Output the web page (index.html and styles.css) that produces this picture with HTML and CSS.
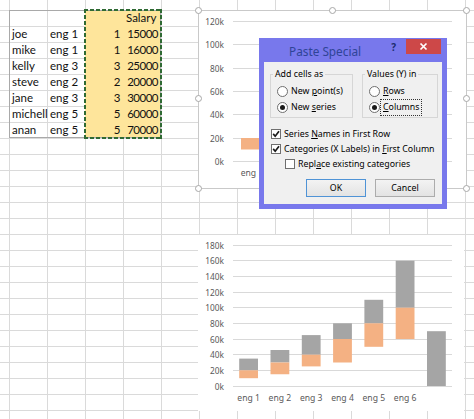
FILE: index.html
```html
<!DOCTYPE html>
<html>
<head>
<meta charset="utf-8">
<link rel="stylesheet" href="styles.css">
</head>
<body>
<div class="sheet">
  <div class="table">
    <div class="cell"></div><div class="cell"></div><div class="cell fill"></div><div class="cell fill num hdr">Salary</div>
    <div class="cell">joe</div><div class="cell">eng 1</div><div class="cell fill num">1</div><div class="cell fill num">15000</div>
    <div class="cell">mike</div><div class="cell">eng 1</div><div class="cell fill num">1</div><div class="cell fill num">16000</div>
    <div class="cell">kelly</div><div class="cell">eng 3</div><div class="cell fill num">3</div><div class="cell fill num">25000</div>
    <div class="cell">steve</div><div class="cell">eng 2</div><div class="cell fill num">2</div><div class="cell fill num">20000</div>
    <div class="cell">jane</div><div class="cell">eng 3</div><div class="cell fill num">3</div><div class="cell fill num">30000</div>
    <div class="cell">michell</div><div class="cell">eng 5</div><div class="cell fill num">5</div><div class="cell fill num">60000</div>
    <div class="cell">anan</div><div class="cell">eng 5</div><div class="cell fill num">5</div><div class="cell fill num">70000</div>
  </div>
  <div class="ants"></div>

  <div class="chart chart-top">
    <svg width="267" height="177" viewBox="0 0 267 177">
      <g class="grid">
        <line x1="34" x2="253" y1="150.5" y2="150.5"/>
        <line x1="34" x2="253" y1="127.5" y2="127.5"/>
        <line x1="34" x2="253" y1="103.5" y2="103.5"/>
        <line x1="34" x2="253" y1="80.5" y2="80.5"/>
        <line x1="34" x2="253" y1="57.5" y2="57.5"/>
        <line x1="34" x2="253" y1="33.5" y2="33.5"/>
        <line x1="34" x2="253" y1="10.5" y2="10.5"/>
      </g>
      <g class="ylab">
        <text x="25" y="150">0k</text>
        <text x="25" y="127">20k</text>
        <text x="25" y="103">40k</text>
        <text x="25" y="80">60k</text>
        <text x="25" y="57">80k</text>
        <text x="25" y="33">100k</text>
        <text x="25" y="10">120k</text>
      </g>
      <rect class="orange" x="42" y="127" width="19" height="11.5"/>
      <text class="xlab" x="53" y="162">eng 1</text>
    </svg>
    <span class="handle h-tl"></span><span class="handle h-tm"></span><span class="handle h-tr"></span>
    <span class="handle h-ml"></span><span class="handle h-mr"></span>
    <span class="handle h-bl"></span><span class="handle h-bm"></span><span class="handle h-br"></span>
  </div>

  <div class="chart chart-bottom">
    <svg width="266" height="176" viewBox="0 0 266 176">
      <g class="grid">
        <line x1="35" x2="254" y1="151.5" y2="151.5"/>
        <line x1="35" x2="254" y1="135.5" y2="135.5"/>
        <line x1="35" x2="254" y1="119.5" y2="119.5"/>
        <line x1="35" x2="254" y1="104.5" y2="104.5"/>
        <line x1="35" x2="254" y1="88.5" y2="88.5"/>
        <line x1="35" x2="254" y1="72.5" y2="72.5"/>
        <line x1="35" x2="254" y1="57.5" y2="57.5"/>
        <line x1="35" x2="254" y1="41.5" y2="41.5"/>
        <line x1="35" x2="254" y1="25.5" y2="25.5"/>
        <line x1="35" x2="254" y1="10.5" y2="10.5"/>
      </g>
      <g class="ylab">
        <text x="26" y="151">0k</text>
        <text x="26" y="135">20k</text>
        <text x="26" y="119">40k</text>
        <text x="26" y="104">60k</text>
        <text x="26" y="88">80k</text>
        <text x="26" y="72">100k</text>
        <text x="26" y="57">120k</text>
        <text x="26" y="41">140k</text>
        <text x="26" y="25">160k</text>
        <text x="26" y="10">180k</text>
      </g>
      <g>
        <rect class="gray" x="41.2" y="123.6" width="18.8" height="11.7"/>
        <rect class="orange" x="41.2" y="135.3" width="18.8" height="7.9"/>
        <rect class="gray" x="72.5" y="115" width="18.8" height="12.5"/>
        <rect class="orange" x="72.5" y="127.5" width="18.8" height="11.75"/>
        <rect class="gray" x="103.8" y="100.1" width="18.8" height="19.6"/>
        <rect class="orange" x="103.8" y="119.7" width="18.8" height="11.7"/>
        <rect class="gray" x="135.1" y="88.3" width="18.8" height="15.7"/>
        <rect class="orange" x="135.1" y="104" width="18.8" height="23.5"/>
        <rect class="gray" x="166.4" y="64.8" width="18.8" height="23.5"/>
        <rect class="orange" x="166.4" y="88.3" width="18.8" height="23.5"/>
        <rect class="gray" x="197.7" y="25.7" width="18.8" height="47"/>
        <rect class="orange" x="197.7" y="72.7" width="18.8" height="31.3"/>
        <rect class="gray" x="229" y="96.2" width="18.8" height="54.8"/>
      </g>
      <g class="xlabs">
        <text class="xlab" x="50.6" y="163">eng 1</text>
        <text class="xlab" x="81.9" y="163">eng 2</text>
        <text class="xlab" x="113.2" y="163">eng 3</text>
        <text class="xlab" x="144.5" y="163">eng 4</text>
        <text class="xlab" x="175.8" y="163">eng 5</text>
        <text class="xlab" x="207.1" y="163">eng 6</text>
      </g>
    </svg>
  </div>

  <div class="dialog">
    <div class="titlebar">
      <span class="title">Paste Special</span>
      <span class="help">?</span>
      <span class="close"><svg width="35" height="15" viewBox="0 0 35 15"><path d="M14.5 4.5 L20.5 10.5 M20.5 4.5 L14.5 10.5" stroke="#fff" stroke-width="1.7" fill="none"/></svg></span>
    </div>
    <div class="client">
      <div class="groups">
        <fieldset class="grp grp-add">
          <legend>Add cells as</legend>
          <div class="opt"><span class="radio"></span><span>New <u>p</u>oint(s)</span></div>
          <div class="opt"><span class="radio on"></span><span>New <u>s</u>eries</span></div>
        </fieldset>
        <fieldset class="grp grp-val">
          <legend>Values (Y) in</legend>
          <div class="opt"><span class="radio"></span><span><u>R</u>ows</span></div>
          <div class="opt"><span class="radio on"></span><span class="focus"><u>C</u>olumns</span></div>
        </fieldset>
      </div>
      <div class="checks">
        <div class="chk"><span class="box"><svg width="8" height="8" viewBox="0 0 8 8"><path d="M1.2 3.9 L3.2 6.2 L7 1.3" stroke="#1a1a1a" stroke-width="1.7" fill="none"/></svg></span><span>Series <u>N</u>ames in First Row</span></div>
        <div class="chk"><span class="box"><svg width="8" height="8" viewBox="0 0 8 8"><path d="M1.2 3.9 L3.2 6.2 L7 1.3" stroke="#1a1a1a" stroke-width="1.7" fill="none"/></svg></span><span>Categories (X Labels) in <u>F</u>irst Column</span></div>
        <div class="chk indent"><span class="box"></span><span>Repl<u>a</u>ce existing categories</span></div>
      </div>
      <div class="buttons">
        <button class="btn default">OK</button>
        <button class="btn">Cancel</button>
      </div>
    </div>
  </div>
</div>
</body>
</html>
```
FILE: styles.css
```css
* { box-sizing: border-box; }
html, body { margin: 0; padding: 0; }
body {
  width: 474px;
  height: 419px;
  overflow: hidden;
  background: #fff;
  font-family: Lato, "Liberation Sans", sans-serif;
}
.sheet {
  position: relative;
  width: 474px;
  height: 419px;
  padding: 10px 0 0 9px;
  background-color: #fff;
  background-image:
    linear-gradient(to right, #dadada 1px, transparent 1px),
    linear-gradient(to bottom, #dadada 1px, transparent 1px);
  background-size: 38px 16px;
  background-position: 9px 10px;
}

/* data table */
.table {
  display: grid;
  grid-template-columns: repeat(4, 38px);
  grid-auto-rows: 16px;
  width: 152px;
  outline: 1px solid #a9a9a9;
  outline-offset: -1px;
  font-size: 11.5px;
  color: #111;
}
.cell {
  padding: 1px 3px 0;
  line-height: 14px;
  white-space: nowrap;
}
.num { text-align: right; letter-spacing: -0.5px; }
.hdr { padding-right: 5px; letter-spacing: 0; }
.fill { background: #fee59b; }
.ants {
  position: absolute;
  left: 84px;
  top: 9px;
  width: 78px;
  height: 130px;
  background:
    repeating-linear-gradient(90deg, #2f6a33 0 4px, transparent 4px 6px) top left / 100% 2px no-repeat,
    repeating-linear-gradient(90deg, #2f6a33 0 4px, transparent 4px 6px) bottom left / 100% 2px no-repeat,
    repeating-linear-gradient(180deg, #2f6a33 0 4px, transparent 4px 6px) top left / 2px 100% no-repeat,
    repeating-linear-gradient(180deg, #2f6a33 0 4px, transparent 4px 6px) top right / 2px 100% no-repeat;
}

/* charts */
.chart {
  position: absolute;
  background: #fff;
}
.chart svg { display: block; }
.chart-top {
  left: 198px;
  top: 10px;
  width: 269px;
  height: 179px;
  border: 1px solid #c9c9c9;
}
.chart-bottom {
  left: 198px;
  top: 235px;
  width: 266px;
  height: 176px;
}
.grid line { stroke: #d9d9d9; stroke-width: 1; }
.ylab text {
  font-family: "Noto Sans", sans-serif;
  font-size: 8.3px;
  fill: #595959;
  text-anchor: end;
  dominant-baseline: central;
}
.xlab {
  font-family: "Noto Sans", sans-serif;
  font-size: 8.6px;
  fill: #595959;
  text-anchor: middle;
  dominant-baseline: central;
}
.orange { fill: #f4b183; }
.gray { fill: #a5a5a5; }
.handle {
  position: absolute;
  width: 7px;
  height: 7px;
  border-radius: 50%;
  border: 1px solid #a8a8a8;
  background: #fff;
}
.h-tl { left: -4px; top: -4px; }
.h-tm { left: 130px; top: -4px; }
.h-tr { right: -4px; top: -4px; }
.h-ml { left: -4px; top: 84px; }
.h-mr { right: -4px; top: 84px; }
.h-bl { left: -4px; bottom: -4px; }
.h-bm { left: 130px; bottom: -4px; }
.h-br { right: -4px; bottom: -4px; }

/* dialog */
.dialog {
  position: absolute;
  left: 259px;
  top: 38px;
  width: 188px;
  height: 171px;
  padding: 0 5px 5px;
  background: #7878ec;
  display: flex;
  flex-direction: column;
  font-family: "Noto Sans", sans-serif;
  font-size: 8.8px;
  color: #000;
}
.titlebar {
  height: 24px;
  display: flex;
  align-items: flex-start;
  flex: none;
}
.title {
  margin-left: 25px;
  margin-top: 5px;
  font-size: 11.8px;
  line-height: 16px;
  color: #2f4497;
}
.help {
  margin-left: auto;
  margin-top: 2px;
  font-size: 10px;
  line-height: 14px;
  font-weight: bold;
  color: #1c2c6e;
}
.close {
  width: 35px;
  height: 15px;
  margin: 1px 1px 0 10px;
  background: #cd4848;
}
.close svg { display: block; }
.client {
  flex: 1;
  background: #f0f0f0;
  padding-top: 7px;
}
.groups {
  display: flex;
  gap: 9px;
  padding-left: 6px;
}
.grp {
  margin: 0;
  min-width: 0;
  height: 49px;
  padding: 3px 0 2px 6px;
  border: 1px solid #d6d6d6;
}
.grp-add { width: 83px; }
.grp-val { width: 76px; }
.grp legend {
  padding: 0 2px;
  margin-left: -4px;
  line-height: 11px;
}
.opt {
  display: flex;
  align-items: center;
  gap: 3px;
  height: 16px;
  white-space: nowrap;
}
.radio {
  position: relative;
  flex: none;
  width: 11px;
  height: 11px;
  border-radius: 50%;
  border: 1px solid #6f6f6f;
  background: #fff;
}
.radio.on::after {
  content: "";
  position: absolute;
  left: 2px;
  top: 2px;
  width: 5px;
  height: 5px;
  border-radius: 50%;
  background: #1a1a1a;
}
.focus {
  outline: 1px dotted #333;
  outline-offset: 2px;
  line-height: 11px;
}
.checks { margin-top: 8px; }
.chk {
  display: flex;
  align-items: center;
  gap: 3px;
  height: 15px;
  padding-left: 7px;
  white-space: nowrap;
}
.chk.indent { padding-left: 21px; }
.box {
  flex: none;
  width: 10px;
  height: 10px;
  border: 1px solid #6f6f6f;
  background: #fff;
}
.box svg { display: block; }
.buttons {
  display: flex;
  justify-content: flex-end;
  gap: 9px;
  padding-right: 7px;
  margin-top: 8px;
}
.btn {
  width: 60px;
  height: 18px;
  padding: 0;
  border: 1px solid #acacac;
  background: linear-gradient(#f3f3f3, #e3e3e3);
  font-family: "Noto Sans", sans-serif;
  font-size: 8.8px;
  color: #000;
}
.btn.default { border-color: #4f93d6; }
```
